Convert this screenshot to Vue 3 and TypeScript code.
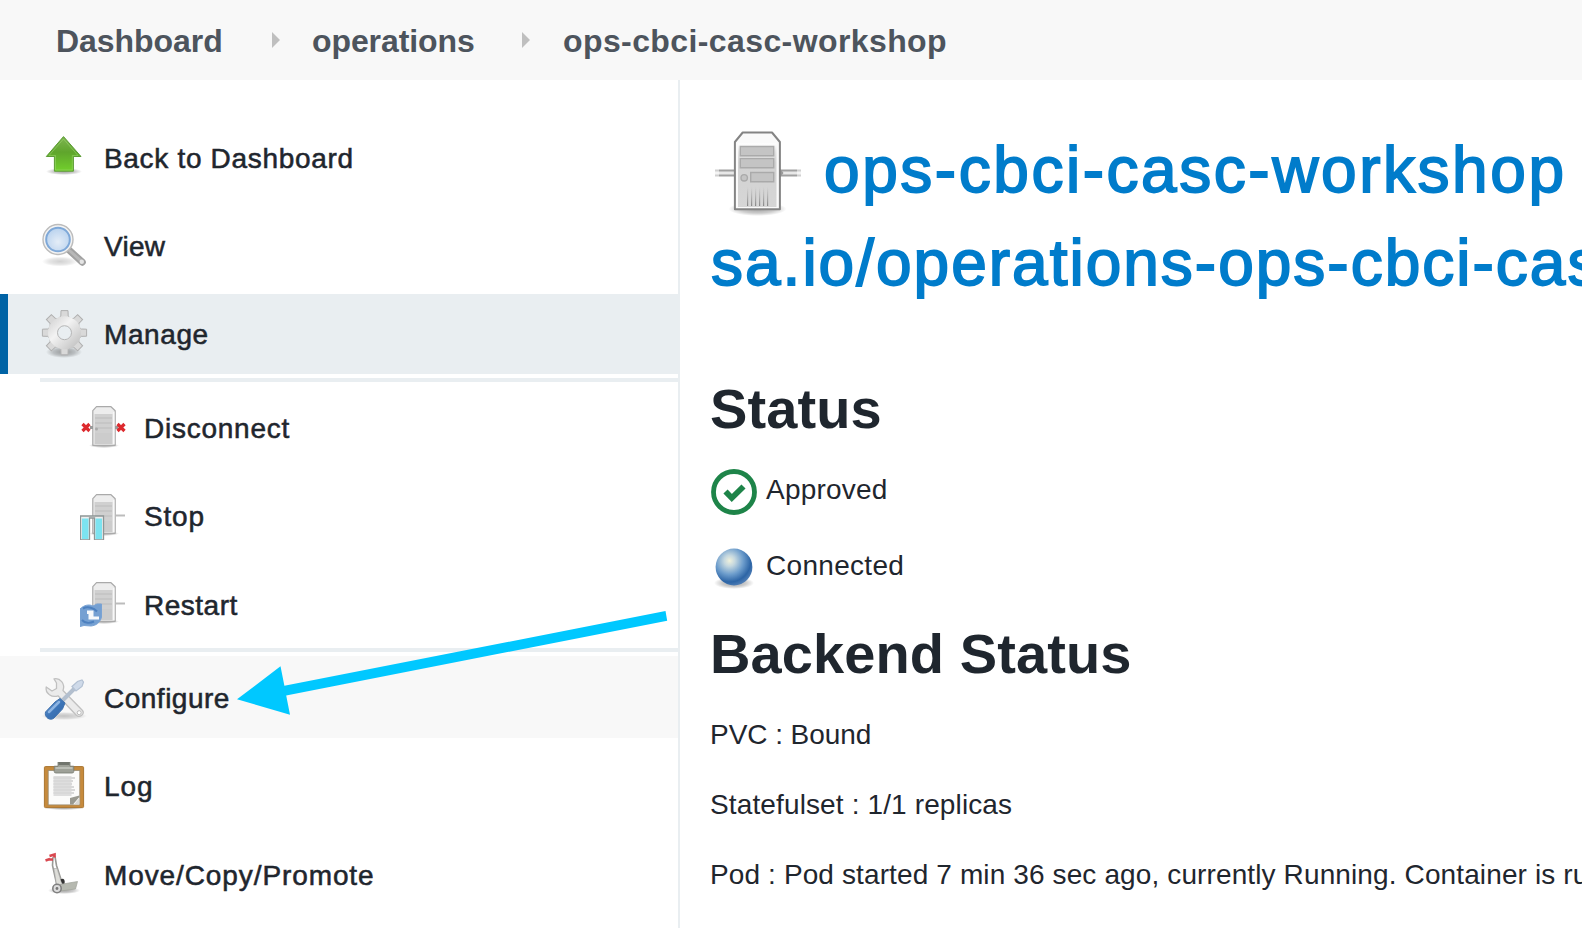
<script setup lang="ts">
interface Crumb { label: string; tracking: number; width: number }
interface Task { label: string; icon: string; tracking: number; kind?: string }

const crumbs: Crumb[] = [
  { label: 'Dashboard', tracking: -0.05, width: 216 },
  { label: 'operations', tracking: -0.1, width: 211 },
  { label: 'ops-cbci-casc-workshop', tracking: 0.4, width: 400 },
]

const primary: Task[] = [
  { label: 'Back to Dashboard', icon: 'up', tracking: 0.68 },
  { label: 'View', icon: 'search', tracking: 0.3 },
  { label: 'Manage', icon: 'gear', tracking: 0.6, kind: 'active' },
]
const nested: Task[] = [
  { label: 'Disconnect', icon: 'disconnect', tracking: 0.75 },
  { label: 'Stop', icon: 'stop', tracking: 0.8 },
  { label: 'Restart', icon: 'restart', tracking: 0.5, kind: 'late' },
]
const secondary: Task[] = [
  { label: 'Configure', icon: 'tools', tracking: 0.5, kind: 'hovered' },
  { label: 'Log', icon: 'log', tracking: 0.9 },
  { label: 'Move/Copy/Promote', icon: 'move', tracking: 0.9, kind: 'late' },
]
const groups = [
  { name: 'primary', tasks: primary },
  { name: 'nested', tasks: nested },
  { name: 'secondary', tasks: secondary },
]
const teeth = [0, 45, 90, 135, 180, 225, 270, 315]
const px = (n: number) => ({ letterSpacing: `${n}px` })
</script>

<template>
  <div class="page">
    <svg class="defs" width="0" height="0" aria-hidden="true">
      <defs>
        <linearGradient id="green" x1="0" y1="0" x2="0" y2="1"><stop offset="0" stop-color="#7fb552" /><stop offset=".45" stop-color="#5fa52c" /><stop offset="1" stop-color="#72d02c" /></linearGradient>
        <linearGradient id="metal" x1="0" y1="0" x2="1" y2="1"><stop offset="0" stop-color="#cdcdcd" /><stop offset=".4" stop-color="#f3f3f3" /><stop offset="1" stop-color="#bababa" /></linearGradient>
        <linearGradient id="case" x1="0" y1="0" x2="0" y2="1"><stop offset="0" stop-color="#fff" /><stop offset=".12" stop-color="#e4e4e4" /><stop offset=".3" stop-color="#d2d2d2" /><stop offset="1" stop-color="#d6d6d6" /></linearGradient>
        <linearGradient id="vent" x1="0" y1="0" x2="0" y2="1"><stop offset="0" stop-color="#999" stop-opacity="0" /><stop offset="1" stop-color="#888" /></linearGradient>
        <linearGradient id="handle" x1="0" y1="0" x2="1" y2="1"><stop offset="0" stop-color="#6c9bd0" /><stop offset=".5" stop-color="#3d75b8" /><stop offset="1" stop-color="#3467a5" /></linearGradient>
        <radialGradient id="lens" cx=".5" cy=".6" r=".6"><stop offset="0" stop-color="#e4edf7" /><stop offset="1" stop-color="#b9d2ee" /></radialGradient>
        <radialGradient id="ball" cx=".38" cy=".33" r=".68"><stop offset="0" stop-color="#f0f1dc" /><stop offset=".22" stop-color="#c4d7df" /><stop offset=".55" stop-color="#6d9dcc" /><stop offset=".85" stop-color="#2d65a6" /><stop offset="1" stop-color="#4a7ab3" /></radialGradient>
        <radialGradient id="shade"><stop offset="0" stop-color="#000" stop-opacity=".36" /><stop offset=".6" stop-color="#000" stop-opacity=".2" /><stop offset="1" stop-color="#000" stop-opacity="0" /></radialGradient>
      </defs>
    </svg>

    <nav class="crumbs">
      <template v-for="(c, i) in crumbs" :key="c.label">
        <span class="crumb" :style="{ letterSpacing: c.tracking + 'px', width: c.width + 'px' }">{{ c.label }}</span>
        <svg v-if="i < 2" class="chevron" viewBox="0 0 8 16"><path d="M0 0 8 8 0 16z" fill="#bfbfbf" /></svg>
      </template>
    </nav>

    <div class="body">
      <aside class="side">
        <ul v-for="g in groups" :key="g.name" :class="['group', g.name]">
          <li v-for="t in g.tasks" :key="t.label" :class="['task', t.kind]">
            <svg class="icon" viewBox="0 0 48 48">
              <g v-if="t.icon === 'up'">
                <ellipse cx="24" cy="37.5" rx="18" ry="3.5" fill="url(#shade)" />
                <path d="M23.5 2.6 41 22.5H33.4V37.2H14.4V22.5H6.3z" fill="url(#green)" stroke="#5c9c35" stroke-width="1" stroke-linejoin="round" />
                <path d="M23.5 5 38 21.5H32.3V36H15.5V21.5H9z" fill="none" stroke="#a0da72" stroke-opacity=".5" />
              </g>
              <g v-else-if="t.icon === 'search'">
                <ellipse cx="20" cy="39.5" rx="18" ry="5" fill="url(#shade)" opacity=".5" />
                <path d="M29 28 42.3 40.2" stroke="#a2a2a2" stroke-width="7" stroke-linecap="round" />
                <path d="M30 29 41.5 39.3" stroke="#b8b8b8" stroke-width="3" stroke-linecap="round" />
                <circle cx="41.8" cy="39.8" r="2.2" fill="#e5e5e5" />
                <circle cx="18" cy="17.5" r="15" fill="#f3f3f3" stroke="#bcbcbc" stroke-width="1.4" />
                <circle cx="18" cy="17.5" r="11.8" fill="url(#lens)" stroke="#7ea8d8" stroke-width="2" />
              </g>
              <g v-else-if="t.icon === 'gear'">
                <ellipse cx="24" cy="42" rx="18" ry="6" fill="url(#shade)" />
                <g fill="#d9d9d9" stroke="#b0b0b0" stroke-width="1">
                  <path v-for="a in teeth" :key="a" d="M17.5 9.5 20.8 6 21 .6H28L28.2 6 31.5 9.5z" :transform="`rotate(${a} 24.5 22.7)`" />
                </g>
                <path d="M24.5 6.2a16.5 16.5 0 1 0 .01 0zM24.5 15.7a7 7 0 1 1-.01 0z" fill="url(#metal)" fill-rule="evenodd" />
                <circle cx="24.5" cy="22.7" r="7" fill="#e9eef1" stroke="#b4b4b4" />
              </g>
              <g v-else-if="['disconnect', 'stop', 'restart'].includes(t.icon)">
                <ellipse cx="24" cy="41.5" rx="15" ry="2.5" fill="url(#shade)" />
                <path v-if="t.icon !== 'disconnect'" d="M36 23.5H45" stroke="#bcbcbc" stroke-width="2" />
                <path d="M12.8 6.7 16.5 2.7H31L35.2 6.7V41.3H12.8z" fill="#ededed" stroke="#aaa" stroke-width="1.2" stroke-linejoin="round" />
                <path d="M14.5 10H32.5V40H14.5z" fill="#d0d0d0" />
                <path d="M15 14H32M15 19H32M15 24H32" stroke="#bbb" stroke-width="1.2" />
                <path d="M15 29H32V40H15z" fill="#ccc" />
                <path d="M33.8 8V40" stroke="#fafafa" stroke-width="1.2" />
                <g v-if="t.icon === 'disconnect'">
                  <path d="M10 23.5H13M35 23.5H38" stroke="#999" stroke-width="3" />
                  <path d="M2.5 20 9.5 27M9.5 20 2.5 27M37.5 20 44.5 27M44.5 20 37.5 27" stroke="#dd2a2e" stroke-width="3.2" />
                  <circle cx="16.5" cy="25" r="1.5" fill="#aaa" />
                </g>
                <g v-else-if="t.icon === 'stop'">
                  <path d="M.5 48V24H23.5V48H14.5V26H9.5V48z" fill="#eee" stroke="#8e9696" stroke-width="1.3" />
                  <path d="M2 26.5H8.5V47H2zM15.5 26.5H22V47H15.5z" fill="#7ce3f0" />
                </g>
                <g v-else>
                  <path d="M0 29C4 25 9 24 13 26L17 24 21.5 24V37C20 43 16 45.5 11 46L4 45.5 0 46.5z" fill="#75a0d2" stroke="#7aa3d4" />
                  <path d="M7 30.5H13.5V36.5H19V39.5H8.5V34H7z" fill="#f7f9fb" />
                  <path d="M2 40C5 43.5 10 43.5 14 41.5M3 28.5C8 26 14 28 17 31.5" fill="none" stroke="#4d80bf" stroke-width="2" />
                </g>
              </g>
              <g v-else-if="t.icon === 'tools'">
                <ellipse cx="24" cy="42" rx="23" ry="4" fill="url(#shade)" opacity=".6" />
                <path d="M14 4.8C20 3.5 25.5 9.5 23 16.5L42.5 36.5C45 40 40 44 36.5 41.5L18 21.8C12 24 5 19.5 6.2 13L12 17 16.5 14.5 16.5 9z" fill="#ebebeb" stroke="#c0c0c0" stroke-width="1.3" stroke-linejoin="round" />
                <circle cx="39.2" cy="38.7" r="2" fill="#fff" stroke="#bbb" />
                <path d="M22 27 36 13" stroke="#b3bfce" stroke-width="4" />
                <path d="M32 12.5 37.5 7.5 42 6 43.5 8 42 12.5 36 17z" fill="#cfdae9" stroke="#b3c1d3" stroke-width="1.2" />
                <path d="M20 24.5 25 29 22.5 35 14 44C10 47.5 4 43 5.5 38L15 28z" fill="url(#handle)" stroke="#3f71ad" />
                <path d="M9 38 19 28" stroke="#8cb4e2" stroke-width="2.5" stroke-linecap="round" />
              </g>
              <g v-else-if="t.icon === 'log'">
                <ellipse cx="24" cy="46" rx="20" ry="2" fill="url(#shade)" />
                <rect x="4.4" y="4.6" width="39.2" height="41" rx="1" fill="#c68a3c" stroke="#a97632" />
                <rect x="8.2" y="8.5" width="31.6" height="34.4" fill="#fbfbfa" stroke="#9a8d72" stroke-width=".8" />
                <rect x="13.5" y="14" width="18" height="20" fill="#dedede" />
                <path d="M13.5 16H35M13.5 19H33M13.5 22H32M13.5 25H34M13.5 28H35M13.5 31H34" stroke="#d8d8d8" stroke-width="2.2" />
                <path d="M30 42.5V36L39.4 33.5V35L33 42.5z" fill="#999990" />
                <path d="M34 42.5 39.4 36V42.5z" fill="#d8d8d4" />
                <path d="M18 0H30V4.2H33.8V9.5Q33.8 11 32 11H16Q14.2 11 14.2 9.5V4.2H18z" fill="#9ea198" stroke="#777b72" stroke-width=".8" />
                <path d="M18.5 0H29.5V3H18.5z" fill="#71756d" />
                <path d="M15.5 6H32.5" stroke="#c0c3ba" stroke-width="1.8" />
              </g>
              <g v-else transform="translate(0 1.5)">
                <ellipse cx="24" cy="39" rx="16" ry="3.5" fill="url(#shade)" />
                <path d="M13 5.5 12.5 14 17 34M15 5 16.5 14 22 31" fill="none" stroke="#9a9a96" stroke-width="1.6" />
                <path d="M14 17 17 17 22 33 16.5 33z" fill="#deded9" stroke="#aaa" stroke-width=".6" />
                <path d="M5.5 9 10 7.5M9.5 4.5 14.5 3V6M9 8H13" fill="none" stroke="#d94850" stroke-width="2.7" />
                <path d="M20.5 28C23 26 25.5 28 24.5 32L23 34z" fill="#333" />
                <path d="M20 33 37.5 30 35.5 37.5 20 39.5z" fill="#b6b9b0" stroke="#a0a39b" stroke-width=".7" />
                <circle cx="17" cy="37" r="4.2" fill="#ddd" stroke="#808080" stroke-width="1.6" />
                <circle cx="17" cy="37" r="1.4" fill="#777" />
              </g>
            </svg>
            <span class="label" :style="px(t.tracking)">{{ t.label }}</span>
          </li>
        </ul>
      </aside>

      <main class="main">
        <h1 class="title">
          <span class="line">
            <svg class="server" viewBox="0 0 96 96">
              <ellipse cx="47.5" cy="85" rx="29" ry="7" fill="url(#shade)" />
              <path d="M5 49H25M70 49H91" stroke="#e8e8e8" stroke-width="4" />
              <path d="M5 46.5H25M5 51.5H25M70 46.5H91M70 51.5H91" stroke="#a0a0a0" stroke-width="1.8" />
              <path d="M2 44H9V54H2zM87 44H94V54H87z" fill="#fff" opacity=".5" />
              <path d="M70 44.5 73.5 49 70 53.5z" fill="#999" />
              <path d="M24.9 18 32.7 8.5H62L69.9 18V85.2H24.9z" fill="#fafafa" stroke="#848484" stroke-width="2" stroke-linejoin="round" />
              <path d="M28 19.5H66.5V83H28z" fill="url(#case)" />
              <g fill="#c4c4c4" stroke="#aaa" stroke-width="1.4">
                <path d="M30.3 22.5H63.7V31.7H30.3zM30.3 34.6H63.7V43.8H30.3zM40.7 48.5H63.7V57.7H40.7z" />
                <circle cx="34.2" cy="53.8" r="3.2" />
              </g>
              <path d="M37 63h1.2v19H37zM41 63h1.2v19H41zM45 63h1.2v19H45zM49 63h1.2v19H49zM53 63h1.2v19H53zM57 63h1.2v19H57z" fill="url(#vent)" />
            </svg>
            <a class="t1">ops-cbci-casc-workshop</a>
          </span>
          <a class="line t2">sa.io/operations-ops-cbci-cas</a>
        </h1>

        <h2 class="heading status">Status</h2>
        <p class="state approved">
          <svg class="icon" viewBox="0 0 48 48"><circle cx="24" cy="24" r="20.5" fill="none" stroke="#1e8449" stroke-width="4.8" /><path d="m15.5 23.5 6.3 6.5L33.5 18.5" fill="none" stroke="#1e8449" stroke-width="5.8" /></svg>
          <span :style="px(0.2)">Approved</span>
        </p>
        <p class="state connected">
          <svg class="icon" viewBox="0 0 48 48"><ellipse cx="24" cy="39" rx="20" ry="6" fill="url(#shade)" /><circle cx="24" cy="23" r="18.4" fill="url(#ball)" /></svg>
          <span :style="px(0.3)">Connected</span>
        </p>
        <h2 class="heading backend">Backend Status</h2>
        <p class="fact" :style="px(-0.05)">PVC : Bound</p>
        <p class="fact" :style="px(0.13)">Statefulset : 1/1 replicas</p>
        <p class="fact" :style="px(0.12)">Pod : Pod started 7 min 36 sec ago, currently Running. Container is ru</p>
      </main>
    </div>

    <svg class="pointer" viewBox="0 0 440 110">
      <path d="M4 89.3 47.5 56.3 51.4 75.8 432.5 1 434.2 10.7 53.2 85.4 57 104.8z" fill="#00c8ff" />
    </svg>
  </div>
</template>

<style>
html, body { margin: 0; overflow: hidden; background: #fff; }
</style>

<style scoped>
.page { position: relative; width: 1582px; height: 928px; overflow: hidden; background: #fff; color: #1f262e; font-family: "Liberation Sans", Arial, sans-serif; font-size: 28px; }
.defs { position: absolute; }
.crumbs { display: flex; align-items: center; height: 80px; padding-left: 56px; box-sizing: border-box; background: #f8f8f8; color: #4d545d; font-size: 32px; font-weight: 700; white-space: nowrap; }
.crumb { padding-top: 2px; line-height: 82px; }
.chevron { width: 8px; height: 16px; margin-right: 32px; flex: none; }
.chevron ~ .chevron { margin-right: 33px; }
.chevron + .crumb { margin-right: -1px; }
.body { display: flex; height: 848px; }
.side { box-sizing: border-box; width: 680px; flex: none; padding-top: 38px; border-right: 2px solid #e9eef1; }
.group { display: flex; flex-direction: column; gap: 8px; list-style: none; margin: 0; padding: 0; }
.task { display: flex; align-items: center; height: 80px; box-sizing: border-box; padding-left: 40px; }
.icon { width: 48px; height: 48px; flex: none; overflow: hidden; }
.task .icon { filter: blur(.55px); }
.connected .icon, .server { filter: blur(.4px); }
.label { margin-left: 16px; padding-top: 2px; line-height: 78px; white-space: nowrap; -webkit-text-stroke: .55px currentColor; }
.late .label { padding-top: 4px; line-height: 76px; }
.active { background: #e9eef1; border-left: 8px solid #0063a5; padding-left: 32px; }
.nested { margin: 4px 0 0 40px; padding: 6px 0 4px; border-top: 4px solid #e9eef1; border-bottom: 4px solid #e9eef1; }
.secondary { margin-top: 4px; }
.hovered { height: 82px; padding-top: 2px; background: #f8f8f8; }
.main { flex: 1; min-width: 0; padding: 44px 0 0 30px; overflow: hidden; }
.title { margin: 0; font-size: 64px; font-weight: 400; color: #007ccb; white-space: nowrap; -webkit-text-stroke: 1.8px currentColor; }
.line { display: flex; height: 93px; line-height: 93px; }
.server { width: 96px; height: 96px; flex: none; }
.t1 { margin-left: 18px; letter-spacing: 2.55px; }
.t2 { padding-left: 1px; letter-spacing: 2px; }
.heading { margin: 0; font-size: 56px; font-weight: 700; height: 64px; line-height: 64px; letter-spacing: .1px; white-space: nowrap; }
.status { margin-top: 67px; }
.state { display: flex; align-items: flex-start; height: 48px; line-height: 44px; margin: 0; }
.state span { margin-left: 8px; }
.approved { margin-top: 27px; }
.connected { margin-top: 28px; }
.backend { margin-top: 30px; }
.fact { margin: 0; height: 70px; line-height: 70px; white-space: nowrap; }
.backend + .fact { margin-top: 14px; }
.pointer { position: absolute; left: 233px; top: 610px; width: 440px; height: 110px; pointer-events: none; }
</style>
